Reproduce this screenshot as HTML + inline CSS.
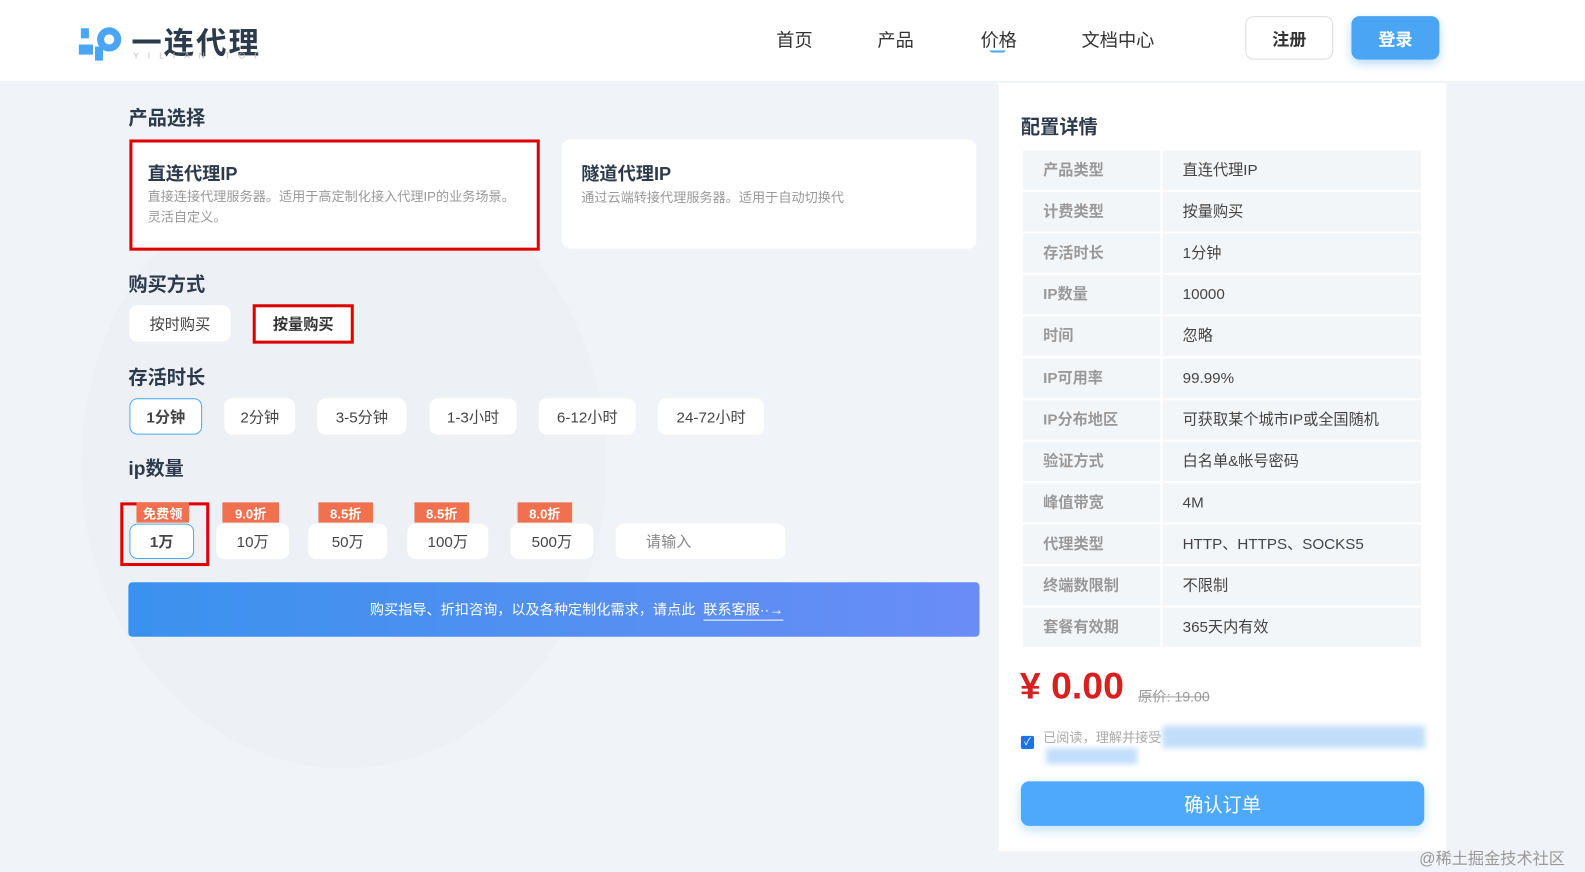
<!DOCTYPE html>
<html><head><meta charset="utf-8"><style>
*{box-sizing:border-box;margin:0;padding:0}
body{width:1585px;height:872px;overflow:hidden;background:#f0f3f7;font-family:"Liberation Sans","Noto Sans CJK SC",sans-serif;color:#333;position:relative}
#w{position:absolute;left:0;top:0;width:1568px;height:863px;transform:scale(1.0108);transform-origin:0 0}
.a{position:absolute}
.hdr{left:0;top:0;width:1568px;height:80px;background:#fff}
.nav{font-size:18px;color:#333;top:26px}
.h{font-size:19px;font-weight:bold;color:#2c3a4b}
.btn{background:#fff;border-radius:8px;font-size:15px;color:#444;display:flex;align-items:center;justify-content:center}
.sel{border:1px solid #4aa6f5;font-weight:bold}
.red{border:3px solid #e00000}
.tag{background:#f07050;color:#fff;font-size:13px;font-weight:bold;height:20px;display:flex;align-items:center;justify-content:center}
.row{left:1012px;width:394px;height:39px;font-size:15px}
.row .l{position:absolute;left:0;top:0;width:136px;height:39px;background:#f3f6f9;color:#999;padding-left:20px;line-height:39px;font-weight:bold}
.row .v{position:absolute;left:138px;top:0;width:256px;height:39px;background:#f3f6f9;color:#444;padding-left:20px;line-height:39px}
</style></head><body><div id="w">
<div class="a" style="left:80px;top:160px;width:520px;height:600px;border-radius:50%;background:#e9eef3;opacity:.35"></div>
<div class="a hdr"></div>
<div class="a" style="left:76px;top:22px;width:48px;height:38px">
<svg width="48" height="40" viewBox="0 0 48 40"><path d="M4 6h8v10H4z M2 22h14v10H2z" fill="#4aa6f5"/><circle cx="32" cy="17" r="12" fill="#4aa6f5"/><circle cx="32" cy="17" r="5" fill="#fff"/><path d="M18 24h8v14h-8z" fill="#4aa6f5"/></svg></div>
<div class="a" style="left:130px;top:18px;font-size:30px;font-weight:bold;color:#2c3a4b;letter-spacing:2px">一连代理</div>
<div class="a" style="left:132px;top:51px;font-size:8px;color:#bbb;letter-spacing:9px">YILIAN.TOP</div>
<div class="a nav" style="left:768px">首页</div>
<div class="a nav" style="left:868px">产品</div>
<div class="a nav" style="left:970px">价格</div>
<div class="a" style="left:979px;top:49px;width:16px;height:3px;border-bottom:2px solid #4aa6f5;border-radius:0 0 8px 8px"></div>
<div class="a nav" style="left:1070px">文档中心</div>
<div class="a btn" style="left:1232px;top:16px;width:87px;height:43px;border:1px solid #ddd;font-size:17px;font-weight:bold;color:#333">注册</div>
<div class="a btn" style="left:1337px;top:16px;width:87px;height:43px;background:#4aa6f5;color:#fff;font-size:17px;font-weight:bold;box-shadow:0 4px 10px rgba(74,166,245,.4)">登录</div>

<div class="a h" style="left:127px;top:102px">产品选择</div>
<div class="a" style="left:128px;top:138px;width:406px;height:110px;background:#fff;border:3px solid #e00000"></div>
<div class="a" style="left:146px;top:158px;font-size:18px;font-weight:bold;color:#2c3a4b">直连代理IP</div>
<div class="a" style="left:146px;top:185px;font-size:13px;color:#999;line-height:20px;width:370px">直接连接代理服务器。适用于高定制化接入代理IP的业务场景。灵活自定义。</div>
<div class="a" style="left:556px;top:138px;width:410px;height:108px;background:#fff;border-radius:8px"></div>
<div class="a" style="left:575px;top:158px;font-size:18px;font-weight:bold;color:#2c3a4b">隧道代理IP</div>
<div class="a" style="left:575px;top:185px;font-size:13px;color:#999">通过云端转接代理服务器。适用于自动切换代</div>

<div class="a h" style="left:127px;top:267px">购买方式</div>
<div class="a btn" style="left:128px;top:302px;width:100px;height:36px">按时购买</div>
<div class="a btn red" style="left:250px;top:301px;width:100px;height:39px;border-radius:0;font-weight:bold;color:#333">按量购买</div>

<div class="a h" style="left:127px;top:359px">存活时长</div>
<div class="a btn sel" style="left:128px;top:394px;width:72px;height:36px">1分钟</div>
<div class="a btn" style="left:222px;top:394px;width:70px;height:36px">2分钟</div>
<div class="a btn" style="left:314px;top:394px;width:88px;height:36px">3-5分钟</div>
<div class="a btn" style="left:425px;top:394px;width:86px;height:36px">1-3小时</div>
<div class="a btn" style="left:533px;top:394px;width:96px;height:36px">6-12小时</div>
<div class="a btn" style="left:651px;top:394px;width:105px;height:36px">24-72小时</div>

<div class="a h" style="left:127px;top:449px">ip数量</div>
<div class="a" style="left:119px;top:497px;width:88px;height:63px;border:3px solid #e00000"></div>
<div class="a tag" style="left:135px;top:497px;width:52px">免费领</div>
<div class="a btn sel" style="left:128px;top:518px;width:64px;height:35px">1万</div>
<div class="a tag" style="left:220px;top:497px;width:56px">9.0折</div>
<div class="a btn" style="left:214px;top:518px;width:72px;height:35px">10万</div>
<div class="a tag" style="left:315px;top:497px;width:54px">8.5折</div>
<div class="a btn" style="left:305px;top:518px;width:78px;height:35px">50万</div>
<div class="a tag" style="left:410px;top:497px;width:54px">8.5折</div>
<div class="a btn" style="left:403px;top:518px;width:80px;height:35px">100万</div>
<div class="a tag" style="left:512px;top:497px;width:54px">8.0折</div>
<div class="a btn" style="left:505px;top:518px;width:82px;height:35px">500万</div>
<div class="a btn" style="left:609px;top:518px;width:168px;height:35px;justify-content:flex-start;padding-left:30px;color:#888">请输入</div>

<div class="a" style="left:127px;top:576px;width:842px;height:54px;border-radius:4px;background:linear-gradient(90deg,#3a92ee,#6a8df5);color:#fff;font-size:14px;display:flex;align-items:center;justify-content:center;padding-left:45px">购买指导、折扣咨询，以及各种定制化需求，请点此&nbsp;&nbsp;<span style="border-bottom:1px solid #fff">联系客服··→</span></div>

<div class="a" style="left:988px;top:82px;width:443px;height:760px;background:#fff"></div>
<div class="a" style="left:1010px;top:111px;font-size:19px;font-weight:bold;color:#2c3a4b">配置详情</div>
<div class="a row" style="top:149px"><div class="l">产品类型</div><div class="v">直连代理IP</div></div>
<div class="a row" style="top:190px"><div class="l">计费类型</div><div class="v">按量购买</div></div>
<div class="a row" style="top:231px"><div class="l">存活时长</div><div class="v">1分钟</div></div>
<div class="a row" style="top:272px"><div class="l">IP数量</div><div class="v">10000</div></div>
<div class="a row" style="top:313px"><div class="l">时间</div><div class="v">忽略</div></div>
<div class="a row" style="top:355px"><div class="l">IP可用率</div><div class="v">99.99%</div></div>
<div class="a row" style="top:396px"><div class="l">IP分布地区</div><div class="v">可获取某个城市IP或全国随机</div></div>
<div class="a row" style="top:437px"><div class="l">验证方式</div><div class="v">白名单&amp;帐号密码</div></div>
<div class="a row" style="top:478px"><div class="l">峰值带宽</div><div class="v">4M</div></div>
<div class="a row" style="top:519px"><div class="l">代理类型</div><div class="v">HTTP、HTTPS、SOCKS5</div></div>
<div class="a row" style="top:560px"><div class="l">终端数限制</div><div class="v">不限制</div></div>
<div class="a row" style="top:601px"><div class="l">套餐有效期</div><div class="v">365天内有效</div></div>
<div class="a" style="left:1009px;top:658px;font-size:37px;font-weight:bold;color:#d92020">¥ 0.00</div>
<div class="a" style="left:1126px;top:679px;font-size:14px;color:#999;text-decoration:line-through">原价: 19.00</div>
<div class="a" style="left:1010px;top:728px;width:13px;height:13px;background:#1a73e8;border-radius:2px;color:#fff;font-size:10px;text-align:center;line-height:13px">✓</div>
<div class="a" style="left:1032px;top:719px;font-size:13px;color:#aaa">已阅读，理解并接受</div>
<div class="a" style="left:1150px;top:718px;width:260px;height:22px;background:#a8d0f8;opacity:.7;filter:blur(3px)"></div>
<div class="a" style="left:1035px;top:740px;width:90px;height:16px;background:#a8d0f8;opacity:.7;filter:blur(3px)"></div>
<div class="a" style="left:1010px;top:773px;width:399px;height:44px;background:#4ea8fb;border-radius:8px;color:#fff;font-size:19px;display:flex;align-items:center;justify-content:center;box-shadow:0 4px 12px rgba(78,168,251,.35)">确认订单</div>
<div class="a" style="left:1404px;top:836px;font-size:16px;color:#999">@稀土掘金技术社区</div>
</div></body></html>
